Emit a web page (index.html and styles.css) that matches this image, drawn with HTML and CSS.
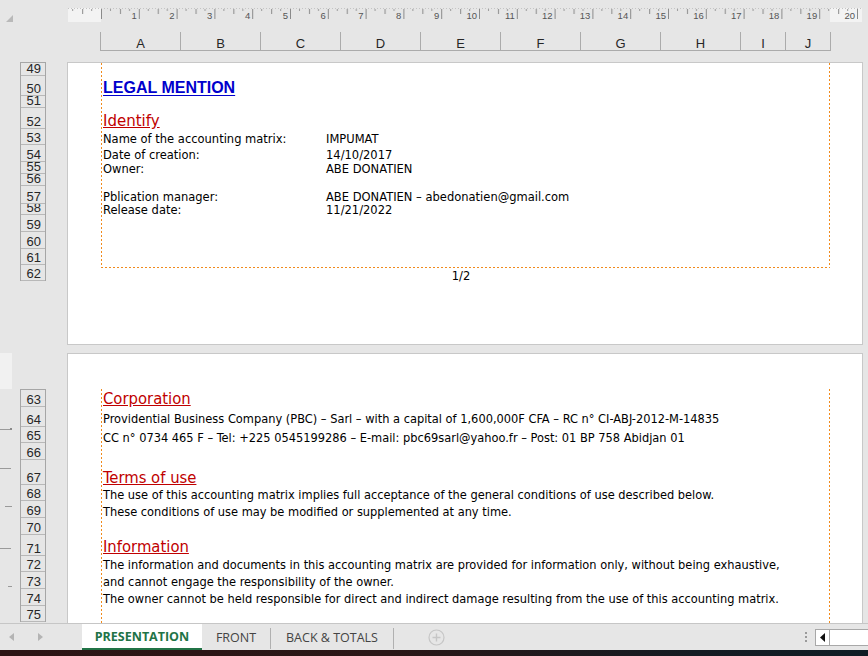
FILE: index.html
```html
<!DOCTYPE html>
<html>
<head>
<meta charset="utf-8">
<link rel="stylesheet" href="styles.css">
</head>
<body>
<header class="topbar">
  <div class="corner"><svg width="7" height="7" viewBox="0 0 7 7"><polygon points="7,0 7,7 0,7" fill="#b9b9b9"/></svg></div>
  <svg class="ruler" width="794" height="14" viewBox="0 0 794 14">
    <defs>
      <pattern id="ticks" x="33" y="0" width="37.8" height="14" patternUnits="userSpaceOnUse">
        <rect x="0" y="1" width="1" height="10" fill="#8a8a8a"/>
        <rect x="9" y="1" width="1" height="2" fill="#9a9a9a"/>
        <rect x="19" y="1" width="1" height="5" fill="#8a8a8a"/>
        <rect x="28" y="1" width="1" height="2" fill="#9a9a9a"/>
      </pattern>
    </defs>
    <rect x="0" y="0" width="33" height="14" fill="#f3f3f3"/>
    <rect x="762" y="0" width="32" height="14" fill="#f3f3f3"/>
    <line x1="0" y1="0.5" x2="794" y2="0.5" stroke="#c4c4c4" stroke-dasharray="1 2"/>
    <rect x="0" y="0" width="794" height="14" fill="url(#ticks)"/>
    <g class="rnum" text-anchor="end">
      <text x="68.8" y="10.5">1</text><text x="106.6" y="10.5">2</text><text x="144.4" y="10.5">3</text><text x="182.2" y="10.5">4</text><text x="220" y="10.5">5</text><text x="257.8" y="10.5">6</text><text x="295.6" y="10.5">7</text><text x="333.4" y="10.5">8</text><text x="371.2" y="10.5">9</text><text x="409" y="10.5">10</text><text x="446.8" y="10.5">11</text><text x="484.6" y="10.5">12</text><text x="522.4" y="10.5">13</text><text x="560.2" y="10.5">14</text><text x="598" y="10.5">15</text><text x="635.8" y="10.5">16</text><text x="673.6" y="10.5">17</text><text x="711.4" y="10.5">18</text><text x="749.2" y="10.5">19</text><text x="787" y="10.5">20</text>
    </g>
  </svg>
</header>

<div class="colheads">
  <div class="ch">A</div><div class="ch">B</div><div class="ch">C</div><div class="ch">D</div><div class="ch">E</div><div class="ch">F</div><div class="ch">G</div><div class="ch">H</div><div class="ch narrow">I</div><div class="ch narrow last">J</div>
</div>

<section class="band band1">
  <div class="gutter">
    <div class="rowheads rh1">
      <div class="rh h13">49</div><div class="rh h20">50</div><div class="rh h12">51</div><div class="rh h21">52</div><div class="rh h16">53</div><div class="rh h17">54</div><div class="rh h12">55</div><div class="rh h12">56</div><div class="rh h18">57</div><div class="rh h11">58</div><div class="rh h17">59</div><div class="rh h17">60</div><div class="rh h16">61</div><div class="rh h16">62</div>
    </div>
  </div>
  <div class="page page1">
    <div class="printarea pa1">
      <h1 class="legal">LEGAL MENTION</h1>
      <h2 class="sub identify">Identify</h2>
      <div class="ident">
        <span>Name of the accounting matrix:</span><span>IMPUMAT</span>
        <span>Date of creation:</span><span>14/10/2017</span>
        <span>Owner:</span><span>ABE DONATIEN</span>
        <span>Pblication manager:</span><span>ABE DONATIEN – abedonatien@gmail.com</span>
        <span>Release date:</span><span>11/21/2022</span>
      </div>
    </div>
    <div class="footer">1/2</div>
  </div>
</section>

<section class="band band2">
  <div class="gutter gutter2">
    <div class="vruler">
      <div class="vmargin"></div>
      <svg width="12" height="234" viewBox="0 0 12 234">
        <rect x="0" y="40" width="12" height="1" fill="#9a9a9a"/>
        <rect x="10" y="39" width="2" height="2" fill="#8a8a8a"/>
        <rect x="0" y="79" width="11" height="1" fill="#9a9a9a"/>
        <rect x="5" y="117" width="7" height="1" fill="#9a9a9a"/>
        <rect x="0" y="159" width="11" height="1" fill="#9a9a9a"/>
        <rect x="8" y="197" width="4" height="1" fill="#9a9a9a"/>
      </svg>
    </div>
    <div class="rowheads rh2">
      <div class="rh h17">63</div><div class="rh h20">64</div><div class="rh h16">65</div><div class="rh h17">66</div><div class="rh h25">67</div><div class="rh h16">68</div><div class="rh h17">69</div><div class="rh h17">70</div><div class="rh h21">71</div><div class="rh h16">72</div><div class="rh h17">73</div><div class="rh h17">74</div><div class="rh h16">75</div>
    </div>
  </div>
  <div class="page page2">
    <div class="printarea pa2">
      <h2 class="sub2 corp">Corporation</h2>
      <p class="ln l18">Providential Business Company (PBC) – Sarl – with a capital of 1,600,000F CFA – RC n° CI-ABJ-2012-M-14835</p>
      <p class="ln l39">CC n° 0734 465 F – Tel: +225 0545199286 – E-mail: pbc69sarl@yahoo.fr – Post: 01 BP 758 Abidjan 01</p>
      <h2 class="sub2 terms">Terms of use</h2>
      <p class="ln l17">The use of this accounting matrix implies full acceptance of the general conditions of use described below.</p>
      <p class="ln l34">These conditions of use may be modified or supplemented at any time.</p>
      <h2 class="sub2 info">Information</h2>
      <p class="ln l17">The information and documents in this accounting matrix are provided for information only, without being exhaustive,</p>
      <p class="ln l17">and cannot engage the responsibility of the owner.</p>
      <p class="ln l17">The owner cannot be held responsible for direct and indirect damage resulting from the use of this accounting matrix.</p>
    </div>
  </div>
</section>

<nav class="tabbar">
  <div class="navs">
    <svg width="5" height="8" viewBox="0 0 5 8"><polygon points="5,0 5,8 0,4" fill="#b4b4b4"/></svg>
    <svg width="5" height="8" viewBox="0 0 5 8"><polygon points="0,0 0,8 5,4" fill="#b4b4b4"/></svg>
  </div>
  <div class="tab active">PRESENTATION</div>
  <div class="tab front">FRONT</div>
  <span class="sep"></span>
  <div class="tab back">BACK &amp; TOTALS</div>
  <span class="sep"></span>
  <div class="addtab"><svg width="17" height="17" viewBox="0 0 17 17"><circle cx="8.5" cy="8.5" r="7.5" fill="none" stroke="#c6c6c6" stroke-width="1.2"/><path d="M8.5 4.5v8M4.5 8.5h8" stroke="#c6c6c6" stroke-width="1.4"/></svg></div>
  <div class="grow"></div>
  <div class="dots"><i></i><i></i><i></i></div>
  <div class="hscroll">
    <div class="hbtn"><svg width="5" height="9" viewBox="0 0 5 9"><polygon points="5,0 5,9 0,4.5" fill="#111"/></svg></div>
    <div class="htrack"></div>
  </div>
</nav>
<div class="taskbar"></div>
</body>
</html>
```

FILE: styles.css
```css
* { box-sizing: border-box; }
html, body { margin: 0; padding: 0; }
body {
  width: 868px;
  height: 656px;
  overflow: hidden;
  background: #e6e6e6;
  font-family: "DejaVu Sans", sans-serif;
  color: #000;
}

/* top: corner + ruler */
.topbar { height: 32px; display: flex; align-items: flex-start; }
.corner { width: 68px; padding: 15px 0 0 6px; line-height: 0; }
.ruler { margin-top: 8px; display: block; }
.rnum text { font-family: "Liberation Sans", sans-serif; font-size: 9.5px; fill: #555; }

/* column headers */
.colheads {
  margin-left: 100px;
  width: 731px;
  height: 19px;
  display: flex;
  border-bottom: 1px solid #ababab;
  margin-bottom: 11px;
}
.ch {
  width: 80px;
  border-left: 1px solid #ababab;
  text-align: center;
  font-family: "Liberation Sans", sans-serif;
  font-size: 13px;
  line-height: 24px;
  color: #262626;
}
.ch.narrow { width: 45px; }
.ch.last { width: 46px; border-right: 1px solid #ababab; }

/* bands */
.band { display: flex; }
.band1 { height: 283px; }
.band2 { height: 270px; margin-top: 8px; overflow: hidden; }
.gutter { width: 67px; flex: none; display: flex; align-items: flex-start; }

.rowheads {
  width: 26px;
  border: 1px solid #a6a6a6;
  border-bottom: none;
  font-family: "Liberation Sans", sans-serif;
  font-size: 13px;
  color: #262626;
}
.rh1 { margin-left: 20px; }
.rh2 { margin-left: 8px; margin-top: 36px; }
.rh {
  display: flex;
  align-items: flex-end;
  justify-content: flex-end;
  overflow: hidden;
  line-height: 13px;
  padding-right: 4px;
  border-bottom: 1px solid #b8b8b8;
}
.h11 { height: 11px; } .h12 { height: 12px; } .h13 { height: 13px; }
.h16 { height: 16px; } .h17 { height: 17px; } .h18 { height: 18px; }
.h20 { height: 20px; } .h21 { height: 21px; } .h25 { height: 25px; }

.vruler { width: 12px; display: flex; flex-direction: column; }
.vmargin { height: 36px; background: #f1f1f1; }
.vruler svg { display: block; }

/* pages */
.page {
  width: 796px;
  flex: none;
  background: #fff;
  border: 1px solid #c8c8c8;
}
.page2 { border-bottom: none; }
.printarea {
  margin-left: 33px;
  width: 729px;
  padding-left: 2px;
  background-image:
    linear-gradient(to bottom, #f08a1c 0, #f08a1c 2px, transparent 2px, transparent 4px),
    linear-gradient(to bottom, #f08a1c 0, #f08a1c 2px, transparent 2px, transparent 4px);
  background-size: 1px 4px, 1px 4px;
  background-position: left top, right top;
  background-repeat: repeat-y, repeat-y;
}
.pa1 {
  height: 205px;
  padding-top: 15px;
  background-image:
    linear-gradient(to bottom, #f08a1c 0, #f08a1c 2px, transparent 2px, transparent 4px),
    linear-gradient(to bottom, #f08a1c 0, #f08a1c 2px, transparent 2px, transparent 4px),
    linear-gradient(to right, #f08a1c 0, #f08a1c 2px, transparent 2px, transparent 4px);
  background-size: 1px 4px, 1px 4px, 4px 1px;
  background-position: left top, right top, left bottom;
  background-repeat: repeat-y, repeat-y, repeat-x;
}
.pa2 { margin-top: 36px; height: 240px; padding-top: 0; }

.legal {
  margin: 0;
  height: 20px;
  font-family: "Liberation Sans", sans-serif;
  font-size: 16px;
  font-weight: bold;
  line-height: 20px;
  color: #0000cc;
  text-decoration: underline;
  text-underline-offset: 2px;
}
.sub {
  margin: 13px 0 0;
  height: 20px;
  font-weight: normal;
  font-size: 15px;
  line-height: 20px;
  color: #c00000;
  text-decoration: underline;
}
.ident {
  display: grid;
  grid-template-columns: 223px auto;
  grid-template-rows: 16px 14px 28px 13px 16px;
  font-size: 11.5px;
  line-height: 16px;
}
.footer {
  font-size: 11.5px;
  line-height: 16px;
  text-align: center;
  padding-right: 8px;
}

/* page 2 */
.pa2 {
  font-family: "DejaVu Sans Condensed", "DejaVu Sans", sans-serif;
  font-stretch: condensed;
}
.sub2 {
  margin: 0;
  font-weight: normal;
  font-size: 16.5px;
  line-height: 20px;
  color: #c00000;
  text-decoration: underline;
}
.corp { height: 21px; margin-top: -1px; }
.terms { height: 18px; }
.info { height: 19px; }
.ln { margin: 0; font-size: 12.7px; line-height: 17px; white-space: nowrap; }
.l17 { height: 17px; }
.l18 { height: 19px; }
.l34 { height: 34px; }
.l39 { height: 39px; }

/* tab bar */
.tabbar {
  height: 27px;
  border-top: 1px solid #c6c6c6;
  display: flex;
  align-items: stretch;
  font-family: "Open Sans", sans-serif;
  font-size: 12.5px;
  color: #444;
}
.navs { width: 82px; display: flex; align-items: center; gap: 24px; padding-left: 9px; }
.tab { display: flex; align-items: center; justify-content: center; }
.tab.active {
  width: 120px;
  background: #fff;
  color: #217346;
  font-weight: bold;
  border-bottom: 2px solid #217346;
}
.tab.front { width: 68px; }
.tab.back { width: 122px; }
.sep { width: 1px; background: #b0b0b0; margin: 4px 0 1px; }
.addtab { width: 84px; display: flex; align-items: center; justify-content: center; }
.grow { flex: 1; }
.dots { width: 16px; display: flex; flex-direction: column; align-items: center; justify-content: center; gap: 2px; }
.dots i { width: 2px; height: 2px; background: #9a9a9a; display: block; }
.hscroll {
  width: 54px;
  margin: 5px -1px 4px 1px;
  border: 1px solid #a8a8a8;
  background: #fff;
  display: flex;
}
.hbtn { width: 14px; border-right: 1px solid #a8a8a8; display: flex; align-items: center; justify-content: center; }
.htrack { flex: 1; }
.taskbar {
  height: 6px;
  background: linear-gradient(90deg, #2c1414 0%, #2a1616 45%, #141b22 80%, #0f1c24 100%);
}
```
